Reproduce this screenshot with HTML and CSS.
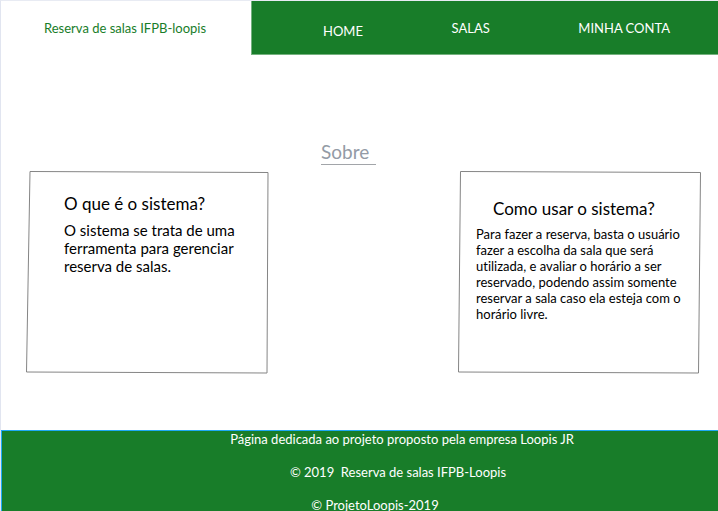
FILE: index.html
```html
<!DOCTYPE html>
<html lang="pt-BR">
<head>
  <meta charset="utf-8">
  <meta name="viewport" content="width=device-width, initial-scale=1">
  <title>Reserva de salas IFPB-loopis</title>
  <link rel="stylesheet" href="styles.css">
</head>
<body>
  <header class="header">
    <a class="brand" href="#">Reserva de salas IFPB-loopis</a>
    <nav class="nav">
      <a class="nav-link nav-link-current" href="#">HOME</a>
      <a class="nav-link" href="#">SALAS</a>
      <a class="nav-link" href="#">MINHA CONTA</a>
    </nav>
  </header>

  <main class="main">
    <h1 class="title">Sobre</h1>
    <div class="cards">
      <section class="card card-about">
        <svg class="outline" viewBox="0 0 243 203" preserveAspectRatio="none" aria-hidden="true">
          <path d="M4 .5L242 1.500L241 202L.5 201Z"/>
        </svg>
        <h2 class="card-title">O que é o sistema?</h2>
        <p class="card-text">O sistema se trata de uma ferramenta para gerenciar reserva de salas.</p>
      </section>
      <section class="card card-usage">
        <svg class="outline" viewBox="0 0 243 203" preserveAspectRatio="none" aria-hidden="true">
          <path d="M2.500 .5L242.500 1.500L240.500 202L.5 201Z"/>
        </svg>
        <h2 class="card-title">Como usar o sistema?</h2>
        <p class="card-text">Para fazer a reserva, basta o usuário fazer a escolha da sala que será utilizada, e avaliar o horário a ser reservado, podendo assim somente reservar a sala caso ela esteja com o horário livre.</p>
      </section>
    </div>
  </main>

  <footer class="footer">
    <p class="footer-line">Página dedicada ao projeto proposto pela empresa Loopis JR</p>
    <p class="footer-line footer-copyright">© 2019&nbsp; Reserva de salas IFPB-Loopis</p>
    <p class="footer-line footer-project">© ProjetoLoopis-2019</p>
  </footer>
</body>
</html>
```
FILE: styles.css
```css
* {
  box-sizing: border-box;
}

html {
  height: 100%;
  overflow: hidden;
}

body {
  display: flex;
  flex-direction: column;
  min-height: 100%;
  margin: 0;
  border-top: 1px solid #e8ebf3;
  border-left: 1px solid #e1e5f0;
  background: #fff;
  color: #000;
  font-family: Lato, "Liberation Sans", sans-serif;
  font-size: 13px;
  font-variant-ligatures: none;
  line-height: 16px;
}

h1,
h2,
p {
  margin: 0;
  font-weight: 400;
}

a {
  text-decoration: none;
}

.header {
  display: grid;
  grid-template-columns: 250px 1fr;
}

.brand {
  padding: 19px 43px;
  color: #187d29;
  white-space: nowrap;
}

.nav {
  display: flex;
  justify-content: space-between;
  align-items: flex-start;
  padding: 19px 48px 15px 71px;
  border-bottom: 1px solid #74b17e;
  border-left: 1px solid #74b17e;
  background: #187d29;
}

.nav-link {
  color: #fff;
}

.nav-link-current {
  padding-top: 3px;
}

.main {
  padding: 85px 17px 56px 25px;
}

.title {
  width: 55px;
  margin: 0 auto 6px 295px;
  border-bottom: 1px solid #a2a5a9;
  color: #939ba6;
  font-size: 19px;
  line-height: 24px;
}

.cards {
  display: flex;
  justify-content: space-between;
}

.card {
  position: relative;
  width: 243px;
  min-height: 203px;
}

.card-about {
  padding: 22px 30px 21px 38px;
}

.card-usage {
  padding: 27px 19px 21px 18px;
}

.outline {
  position: absolute;
  inset: 0;
  width: 100%;
  height: 100%;
  fill: none;
  stroke: #858585;
  stroke-width: 1;
}

.card-title {
  margin-bottom: 6px;
  font-size: 17px;
  line-height: 22px;
}

.card-usage .card-title {
  padding-left: 17px;
}

.card-about .card-text {
  font-size: 15px;
  line-height: 18px;
}

.footer {
  display: flex;
  flex: 1;
  flex-direction: column;
  gap: 17px;
  border-top: 1px solid #1fa9f5;
  border-left: 1px solid #1fa9f5;
  padding-right: 84px;
  padding-left: 168px;
  background: #187d29;
  color: #fff;
  text-align: center;
}

.footer-copyright {
  padding-right: 8px;
}

.footer-project {
  padding-right: 54px;
}
```
